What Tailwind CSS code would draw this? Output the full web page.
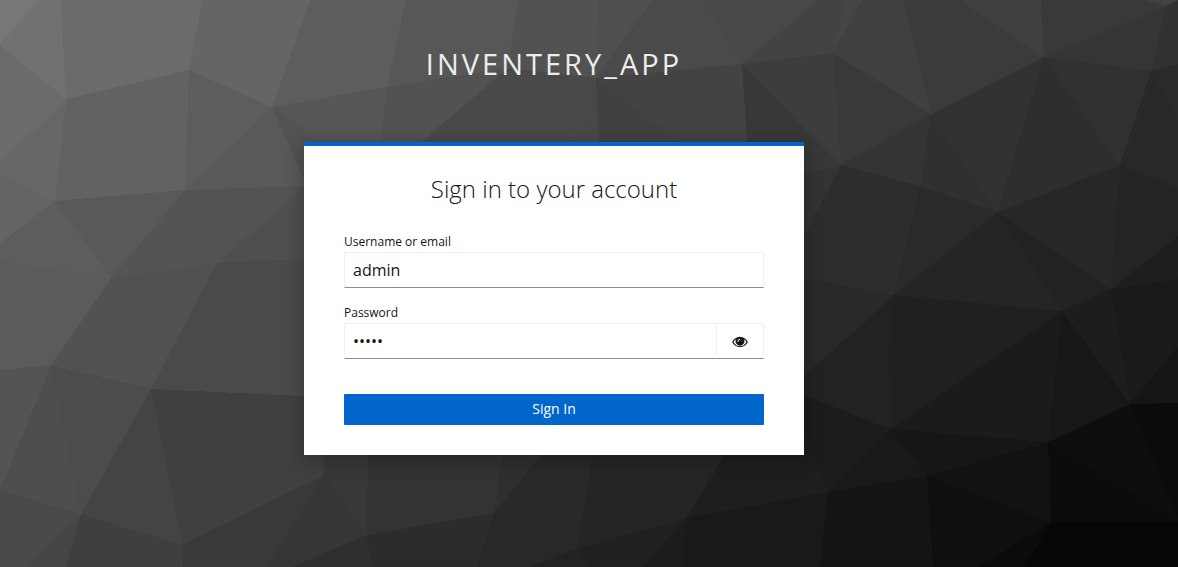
<!DOCTYPE html>
<html lang="en">
<head>
<meta charset="utf-8">
<meta name="viewport" content="width=device-width, initial-scale=1">
<title>Sign in to inventery_app</title>
<script src="https://cdn.jsdelivr.net/npm/@tailwindcss/browser@4"></script>
</head>
<body class="relative isolate min-h-screen bg-[#2b2b2b] font-['Open_Sans','Noto_Sans',sans-serif] text-[#151515]">

<!-- Faceted backdrop -->
<svg class="absolute inset-0 -z-10 h-full w-full" viewBox="0 0 1178 567" preserveAspectRatio="xMidYMid slice" shape-rendering="crispEdges" aria-hidden="true">
  <polygon fill="#777777" points="0,0 38,0 0,45"/>
  <polygon fill="#717171" points="38,0 61,0 66,99 0,45"/>
  <polygon fill="#6b6b6b" points="61,0 202,0 189,70 66,99"/>
  <polygon fill="#656565" points="202,0 310,0 272,107 189,70"/>
  <polygon fill="#6b6b6b" points="0,45 66,99 0,163"/>
  <polygon fill="#676767" points="66,99 55,201 0,173 0,163"/>
  <polygon fill="#646464" points="0,173 55,201 0,243"/>
  <polygon fill="#626262" points="66,99 189,70 185,190 55,201"/>
  <polygon fill="#5d5d5d" points="189,70 272,107 185,190"/>
  <polygon fill="#595959" points="55,201 185,190 111,278"/>
  <polygon fill="#5d5d5d" points="0,243 55,201 111,278 0,260"/>
  <polygon fill="#595959" points="272,107 306,186 185,190"/>
  <polygon fill="#545454" points="185,190 217,263 111,278"/>
  <polygon fill="#535353" points="185,190 306,186 217,263"/>
  <polygon fill="#5b5b5b" points="0,260 111,278 51,365 0,370"/>
  <polygon fill="#4f4f4f" points="306,186 320,258 217,263"/>
  <polygon fill="#515151" points="111,278 217,263 151,389"/>
  <polygon fill="#525252" points="111,278 151,389 51,365"/>
  <polygon fill="#4a4a4a" points="217,263 320,258 320,397 151,389"/>
  <polygon fill="#545454" points="0,370 51,365 0,490"/>
  <polygon fill="#4c4c4c" points="51,365 151,389 81,514"/>
  <polygon fill="#4e4e4e" points="51,365 81,514 0,490"/>
  <polygon fill="#494949" points="0,490 81,514 28,567 0,567"/>
  <polygon fill="#454545" points="81,514 66,567 28,567"/>
  <polygon fill="#3f3f3f" points="81,514 182,545 183,567 66,567"/>
  <polygon fill="#444444" points="151,389 182,545 81,514"/>
  <polygon fill="#404040" points="151,389 324,397 324,475 182,545"/>
  <polygon fill="#393939" points="182,545 324,475 267,567 183,567"/>
  <polygon fill="#363636" points="324,475 367,535 292,567 267,567"/>
  <polygon fill="#383838" points="324,475 324,440 368,440 367,535"/>
  <polygon fill="#333333" points="368,440 504,440 494,513 367,535"/>
  <polygon fill="#2f2f2f" points="367,535 372,567 292,567"/>
  <polygon fill="#2c2c2c" points="367,535 494,513 477,567 372,567"/>
  <polygon fill="#2f2f2f" points="494,513 504,440 553,440"/>
  <polygon fill="#292929" points="494,513 553,440 596,440 576,549"/>
  <polygon fill="#282828" points="494,513 576,549 530,567 477,567"/>
  <polygon fill="#222222" points="576,549 591,567 530,567"/>
  <polygon fill="#252525" points="576,549 596,440 734,440 686,518"/>
  <polygon fill="#202020" points="576,549 686,518 643,567 591,567"/>
  <polygon fill="#1c1c1c" points="686,518 683,567 643,567"/>
  <polygon fill="#1e1e1e" points="686,518 734,440 804,430 828,492"/>
  <polygon fill="#191919" points="686,518 828,492 820,567 683,567"/>
  <polygon fill="#1c1c1c" points="828,492 800,420 790,389 890,429"/>
  <polygon fill="#191919" points="828,492 890,429 927,476"/>
  <polygon fill="#141414" points="828,492 927,476 933,567 820,567"/>
  <polygon fill="#222222" points="894,295 890,429 790,389"/>
  <polygon fill="#202020" points="894,295 1062,311 890,429"/>
  <polygon fill="#1b1b1b" points="890,429 1062,311 1048,442"/>
  <polygon fill="#161616" points="890,429 1048,442 927,476"/>
  <polygon fill="#121212" points="927,476 1048,442 1051,522"/>
  <polygon fill="#0f0f0f" points="927,476 1051,522 978,567 933,567"/>
  <polygon fill="#0b0b0b" points="1051,522 1025,567 978,567"/>
  <polygon fill="#060606" points="1051,522 1178,522 1178,567 1025,567"/>
  <polygon fill="#0c0c0c" points="1048,442 1178,520 1178,522 1051,522"/>
  <polygon fill="#0e0e0e" points="1048,442 1130,404 1178,520"/>
  <polygon fill="#0b0b0b" points="1130,404 1178,403 1178,520"/>
  <polygon fill="#171717" points="1062,311 1130,404 1048,442"/>
  <polygon fill="#1d1d1d" points="1062,311 1111,289 1130,404"/>
  <polygon fill="#1a1a1a" points="1111,289 1178,279 1178,346 1130,404"/>
  <polygon fill="#151515" points="1130,404 1178,346 1178,403"/>
  <polygon fill="#1e1e1e" points="1111,289 1178,236 1178,279"/>
  <polygon fill="#242424" points="1120,165 1178,188 1178,236 1111,289"/>
  <polygon fill="#272727" points="997,212 1120,165 1111,289"/>
  <polygon fill="#222222" points="997,212 1111,289 1062,311"/>
  <polygon fill="#252525" points="997,212 1062,311 894,295"/>
  <polygon fill="#2a2a2a" points="920,186 997,212 894,295"/>
  <polygon fill="#2d2d2d" points="841,165 920,186 894,295 790,275 790,262"/>
  <polygon fill="#292929" points="790,275 894,295 790,389"/>
  <polygon fill="#333333" points="841,165 790,262 790,178"/>
  <polygon fill="#383838" points="742,64 841,165 790,178 748,160"/>
  <polygon fill="#3d3d3d" points="742,64 833,53 841,165"/>
  <polygon fill="#393939" points="833,53 931,114 841,165"/>
  <polygon fill="#343434" points="841,165 931,114 920,186"/>
  <polygon fill="#303030" points="931,114 997,212 920,186"/>
  <polygon fill="#323232" points="931,114 1044,57 997,212"/>
  <polygon fill="#2e2e2e" points="1044,57 1120,165 997,212"/>
  <polygon fill="#313131" points="1044,57 1151,71 1120,165"/>
  <polygon fill="#2a2a2a" points="1151,71 1178,64 1178,188 1120,165"/>
  <polygon fill="#282828" points="1151,71 1178,122 1178,188 1120,165"/>
  <polygon fill="#353535" points="1044,57 1166,6 1151,71"/>
  <polygon fill="#313131" points="1166,6 1178,0 1178,64 1151,71"/>
  <polygon fill="#3b3b3b" points="903,0 960,0 1044,57 931,114"/>
  <polygon fill="#404040" points="833,53 862,0 903,0 931,114"/>
  <polygon fill="#454545" points="833,53 846,0 862,0"/>
  <polygon fill="#434343" points="742,64 818,0 846,0 833,53"/>
  <polygon fill="#484848" points="703,0 818,0 742,64"/>
  <polygon fill="#404040" points="960,0 1041,0 1044,57"/>
  <polygon fill="#393939" points="1041,0 1145,0 1166,6 1044,57"/>
  <polygon fill="#414141" points="1145,0 1178,0 1166,6"/>
  <polygon fill="#4a4a4a" points="596,78 652,0 703,0 742,64"/>
  <polygon fill="#434343" points="596,78 742,64 748,160 600,160"/>
  <polygon fill="#414141" points="596,78 706,160 600,160"/>
  <polygon fill="#484848" points="596,78 600,160 564,160"/>
  <polygon fill="#4f4f4f" points="598,0 652,0 596,78"/>
  <polygon fill="#525252" points="518,0 598,0 596,78 508,68"/>
  <polygon fill="#494949" points="508,68 596,78 564,160 400,160"/>
  <polygon fill="#575757" points="406,0 518,0 508,68 387,87"/>
  <polygon fill="#525252" points="387,87 508,68 400,160 378,160"/>
  <polygon fill="#5d5d5d" points="310,0 406,0 387,87 272,107"/>
  <polygon fill="#565656" points="272,107 387,87 378,160 320,160"/>
  <polygon fill="#535353" points="272,107 350,160 306,186"/>
</svg>

<div class="flex flex-col items-center px-4 pb-8 lg:pr-[86px]">
  <header class="w-full px-2.5 pt-[46px] pb-[61px] text-center text-[29px] leading-[35px] tracking-[3px] text-[#ededed] uppercase">inventery_app</header>

  <main class="w-full max-w-[500px] border-t-4 border-[#0066cc] bg-white px-10 pb-[30px] shadow-[0_4px_16px_4px_rgba(3,3,3,0.2)]">
    <h1 class="pt-[27px] pb-[30px] text-center text-2xl leading-[31px] font-light">Sign in to your account</h1>
    <form onsubmit="return false">
      <label for="username" class="block pb-0.5 text-xs leading-4">Username or email</label>
      <input id="username" name="username" type="text" value="admin" autocomplete="off" class="block h-9 w-full rounded-none border border-[#f0f0f0] border-b-[#8a8d90] bg-white px-2 text-base outline-none">

      <label for="password" class="mt-[17px] block pb-0.5 text-xs leading-4">Password</label>
      <div class="flex">
        <input id="password" name="password" type="password" value="admin" class="block h-9 min-w-0 flex-1 rounded-none border border-r-0 border-[#f0f0f0] border-b-[#8a8d90] bg-white px-2 text-base outline-none">
        <button type="button" aria-label="Show password" class="flex h-9 w-12 items-center justify-center border border-[#f0f0f0] border-b-[#8a8d90] bg-white pt-0.5">
          <svg class="h-4 w-4" viewBox="0 0 576 512" fill="#151515" aria-hidden="true"><path fill-rule="evenodd" d="M288 64C165 64 61 146 8 244a26 26 0 0 0 0 24c53 98 157 180 280 180s227-82 280-180a26 26 0 0 0 0-24C515 146 411 64 288 64zm0 348c-96 0-180-62-233-156 25-44 58-81 97-108a158 158 0 1 0 272 0c39 27 72 64 97 108-53 94-137 156-233 156zm-7-260c-46 2-82 38-84 84a17 17 0 0 0 34 0c2-28 22-48 50-50a17 17 0 0 0 0-34z"/></svg>
        </button>
      </div>

      <button type="submit" class="mt-[35px] block h-[31px] w-full rounded-[1px] bg-[#0066cc] pb-0.5 text-sm leading-[21px] text-white">Sign In</button>
    </form>
  </main>
</div>
</body>
</html>
